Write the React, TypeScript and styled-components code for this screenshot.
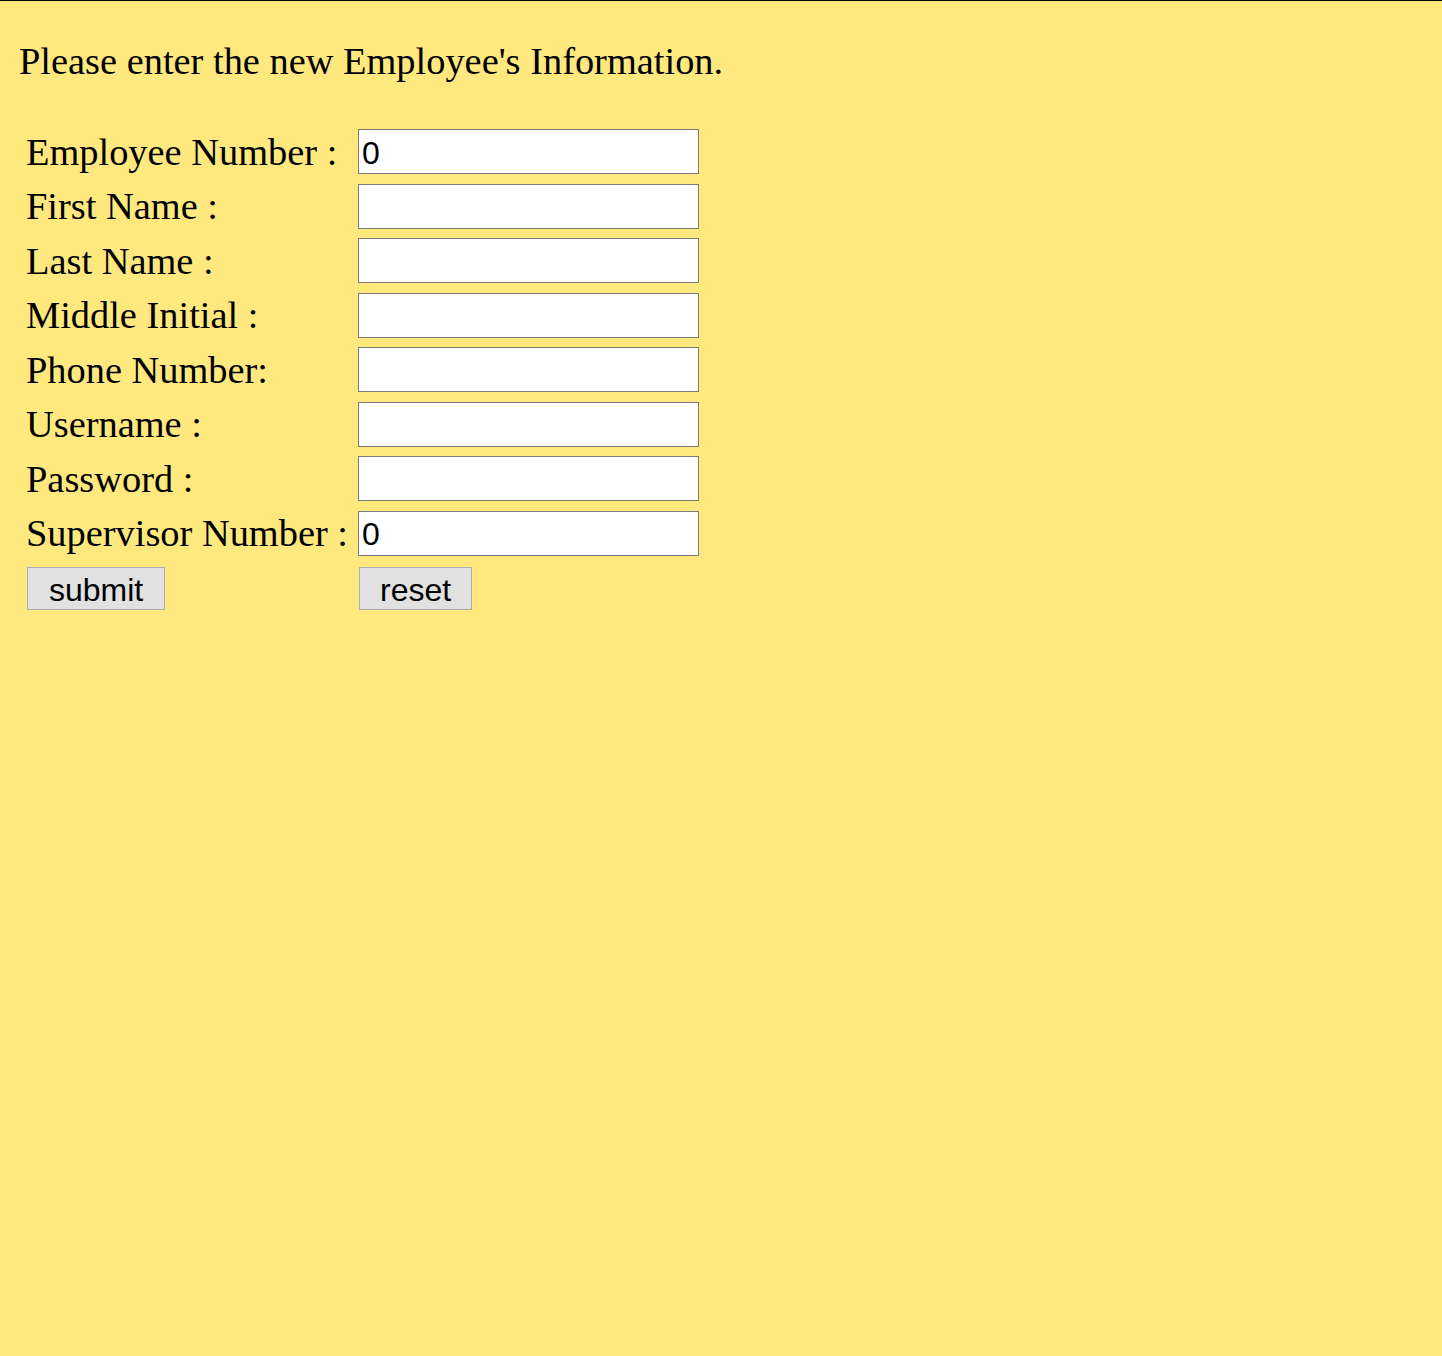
import React from "react";
import styled, { createGlobalStyle } from "styled-components";

const GlobalStyle = createGlobalStyle`
  html, body {
    margin: 0;
    padding: 0;
    background: #ffe97f;
  }
  body {
    font-family: "Liberation Serif", "Times New Roman", serif;
    color: #000;
  }
`;

const Page = styled.div`
  min-height: 1356px;
  box-sizing: border-box;
  border-top: 1px solid #000;
  background: #ffe97f;
`;

const Heading = styled.p`
  margin: 38px 0 0 19px;
  font-size: 38.4px;
  line-height: 44px;
`;

const Form = styled.form`
  display: grid;
  grid-template-columns: 331px 341px;
  grid-auto-rows: 45px;
  row-gap: 9.57px;
  margin: 46px 0 0 27px;
`;

const Label = styled.label`
  display: flex;
  align-items: center;
  margin-left: -1px;
  font-size: 38.4px;
  line-height: 44px;
  white-space: nowrap;
`;

const Input = styled.input`
  box-sizing: border-box;
  width: 341px;
  height: 45px;
  margin: 0;
  padding: 3px 3px 0;
  border: 1px solid #7a7a7a;
  background: #fff;
  font-family: "Liberation Sans", Arial, sans-serif;
  font-size: 32px;
  color: #000;
  outline: none;
`;

const ButtonCell = styled.div<{ $shift?: number }>`
  display: flex;
  align-items: flex-start;
  padding-top: 1.5px;
  margin-left: ${(p) => p.$shift ?? 0}px;
`;

const Button = styled.button<{ $pad: number }>`
  box-sizing: border-box;
  height: 43px;
  padding: 2px ${(p) => p.$pad}px 0;
  margin: 0;
  border: 1px solid #adadad;
  background: #e1e1e1;
  font-family: "Liberation Sans", Arial, sans-serif;
  font-size: 32px;
  line-height: 40px;
  color: #000;
  cursor: pointer;
`;

const fields: { label: string; value: string; type?: string }[] = [
  { label: "Employee Number :", value: "0" },
  { label: "First Name :", value: "" },
  { label: "Last Name :", value: "" },
  { label: "Middle Initial :", value: "" },
  { label: "Phone Number:", value: "" },
  { label: "Username :", value: "" },
  { label: "Password :", value: "", type: "password" },
  { label: "Supervisor Number :", value: "0" },
];

export default function App() {
  return (
    <>
      <GlobalStyle />
      <Page>
        <Heading>Please enter the new Employee's Information.</Heading>
        <Form onSubmit={(e) => e.preventDefault()}>
          {fields.map((f, i) => (
            <React.Fragment key={f.label}>
              <Label htmlFor={`f${i}`}>{f.label}</Label>
              <Input id={`f${i}`} type={f.type ?? "text"} defaultValue={f.value} />
            </React.Fragment>
          ))}
          <ButtonCell>
            <Button type="submit" $pad={21}>submit</Button>
          </ButtonCell>
          <ButtonCell $shift={1}>
            <Button type="reset" $pad={20}>reset</Button>
          </ButtonCell>
        </Form>
      </Page>
    </>
  );
}
